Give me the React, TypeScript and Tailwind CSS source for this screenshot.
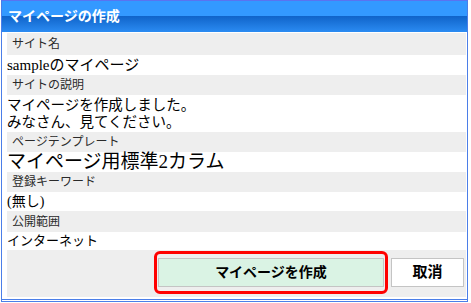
import React from 'react';

const jp = "font-['Liberation_Sans','Noto_Sans_CJK_JP',sans-serif]";
const jpSerif = "font-['Liberation_Serif','Noto_Sans_CJK_JP',serif]";

const Label = ({ children, h }: { children: React.ReactNode; h: string }) => (
  <div className={`${h} bg-[#eeeeee] pl-[5px] flex items-center text-[12px] text-[#2a2a2a] ${jp}`}>{children}</div>
);

const Value = ({ children, className }: { children: React.ReactNode; className: string }) => (
  <div className={`bg-white flex flex-col justify-center text-black ${jpSerif} ${className}`}>{children}</div>
);

export default function App() {
  return (
    <div className="w-[471px] h-[303px] bg-white">
      <div className="ml-[1px] w-[467px] h-[302px] border border-[#4b7ee8] border-t-[#5a73f0] flex flex-col">
        <div
          className={`h-[31px] shrink-0 bg-[linear-gradient(to_bottom,#3399ff_0%,#3399ff_48%,#0f63c9_48%,#2b8bf2_100%)] flex items-center pl-[6px] text-white font-bold text-[14px] ${jp}`}
        >
          マイページの作成
        </div>
        <div className="h-[1px] shrink-0" />
        <div className="pl-[5px] pr-[1px] flex flex-col">
          <Label h="h-[22px]">サイト名</Label>
          <Value className="h-[20px] text-[15px] leading-[20px]">
            <span>
              sample<span>のマイページ</span>
            </span>
          </Value>
          <Label h="h-[20px]">サイトの説明</Label>
          <Value className="h-[37px] text-[14.5px] leading-[17px]">
            <span>マイページを作成しました。</span>
            <span>みなさん、見てください。</span>
          </Value>
          <Label h="h-[20px]">ページテンプレート</Label>
          <Value className="h-[20px] text-[19px] leading-[20px]">
            <span>マイページ用標準2カラム</span>
          </Value>
          <Label h="h-[20px]">登録キーワード</Label>
          <Value className="h-[19px] text-[14px] leading-[19px]">
            <span>(無し)</span>
          </Value>
          <Label h="h-[21px]">公開範囲</Label>
          <Value className="h-[18px] text-[13px] leading-[18px]">
            <span>インターネット</span>
          </Value>
          <div className="h-[47px] bg-[#eeeeee] flex items-start justify-end pt-[1px] pr-[2px] gap-[3px]">
            <div className="w-[234px] h-[43px] border-[3px] border-[#ff0000] rounded-[6px] p-[1px] pt-[4px]">
              <button
                className={`w-[226px] h-[29px] bg-[#daf3e4] border border-[#c4c4c4] text-black font-bold text-[14px] ${jp}`}
              >
                マイページを作成
              </button>
            </div>
            <button
              className={`mt-[7px] w-[73px] h-[29px] bg-white border border-[#c4c4c4] text-black font-bold text-[15px] ${jp}`}
            >
              取消
            </button>
          </div>
        </div>
        <div className="h-[2px] shrink-0" />
        <div className="h-[1px] shrink-0 bg-[#4b7ee8]" />
      </div>
    </div>
  );
}
